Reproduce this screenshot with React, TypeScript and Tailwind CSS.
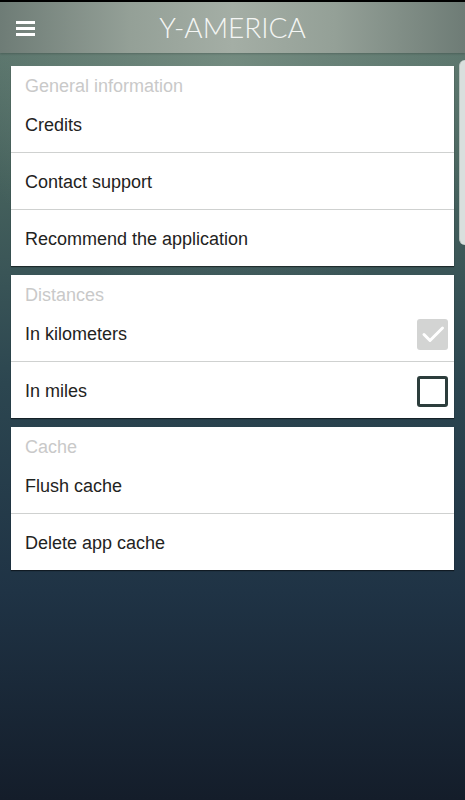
import React from 'react';

type Row = { label: string; check?: boolean };
type Section = { title: string; rows: Row[] };

const sections: Section[] = [
  {
    title: 'General information',
    rows: [{ label: 'Credits' }, { label: 'Contact support' }, { label: 'Recommend the application' }],
  },
  {
    title: 'Distances',
    rows: [
      { label: 'In kilometers', check: true },
      { label: 'In miles', check: false },
    ],
  },
  {
    title: 'Cache',
    rows: [{ label: 'Flush cache' }, { label: 'Delete app cache' }],
  },
];

const Checkbox: React.FC<{ checked: boolean }> = ({ checked }) =>
  checked ? (
    <div className="w-[31px] h-[31px] rounded-[3px] bg-[#d3d4d3] flex items-center justify-center">
      <svg width="24" height="24" viewBox="0 0 24 24" fill="none">
        <path d="M3 12.5l6 6L21.5 6" stroke="#fff" strokeWidth="3" strokeLinecap="round" strokeLinejoin="round" />
      </svg>
    </div>
  ) : (
    <div className="w-[31px] h-[31px] rounded-[3px] border-[3px] border-[#2c3d3c]" />
  );

const App: React.FC = () => {
  return (
    <div
      className="relative w-[465px] h-[800px] overflow-hidden bg-[linear-gradient(180deg,#607a70_0%,#46625d_22%,#2c4650_48%,#1f3345_74%,#141d2a_100%)]"
      style={{ fontFamily: '"Liberation Sans", Arial, sans-serif' }}
    >
      <div className="absolute inset-0 bg-[radial-gradient(ellipse_60%_30%_at_50%_8%,rgba(150,170,155,0.45),rgba(150,170,155,0)_100%)]" />

      {/* top bar */}
      <div className="relative h-[53px] border-t-2 border-black bg-[linear-gradient(90deg,#6e7c76_0%,#94a097_28%,#a4aea5_50%,#94a097_72%,#6e7c76_100%)] shadow-[0_1px_2px_rgba(0,0,0,0.2)] flex items-center">
        <div className="absolute left-4 top-[19px] flex flex-col gap-[3.5px]">
          <div className="w-[19px] h-[2.5px] bg-white" />
          <div className="w-[19px] h-[2.5px] bg-white" />
          <div className="w-[19px] h-[2.5px] bg-white" />
        </div>
        <div
          className="w-full text-center text-[28px] font-light text-[#f4f6f4] leading-none pb-[2px]"
          style={{ fontFamily: 'Lato, "Open Sans", sans-serif' }}
        >
          Y-AMERICA
        </div>
      </div>

      {/* right edge panel peek */}
      <div className="absolute right-0 top-[60px] w-[6px] h-[185px] rounded-l-[8px] bg-[#d9dfdd] border-l border-[#b8c2bf]" />

      <div className="relative px-[11px] pt-[13px] flex flex-col gap-[9px]">
        {sections.map((s) => (
          <div key={s.title} className="bg-white shadow-[0_1px_1px_rgba(0,0,0,0.5)]">
            <div className="h-[30px] pl-[14px] pt-[10px] text-[18px] leading-[20px] text-[#c9c9c9]">{s.title}</div>
            {s.rows.map((r, i) => (
              <div
                key={r.label}
                className={`pl-[14px] pr-[6px] pt-[2px] flex items-center justify-between text-[18px] text-[#1f2322] ${
                  i > 0 ? 'border-t border-[#cfd1d0] h-[57px]' : 'h-[56px]'
                }`}
              >
                <span>{r.label}</span>
                {r.check !== undefined && <Checkbox checked={r.check} />}
              </div>
            ))}
          </div>
        ))}
      </div>
    </div>
  );
};

export default App;
